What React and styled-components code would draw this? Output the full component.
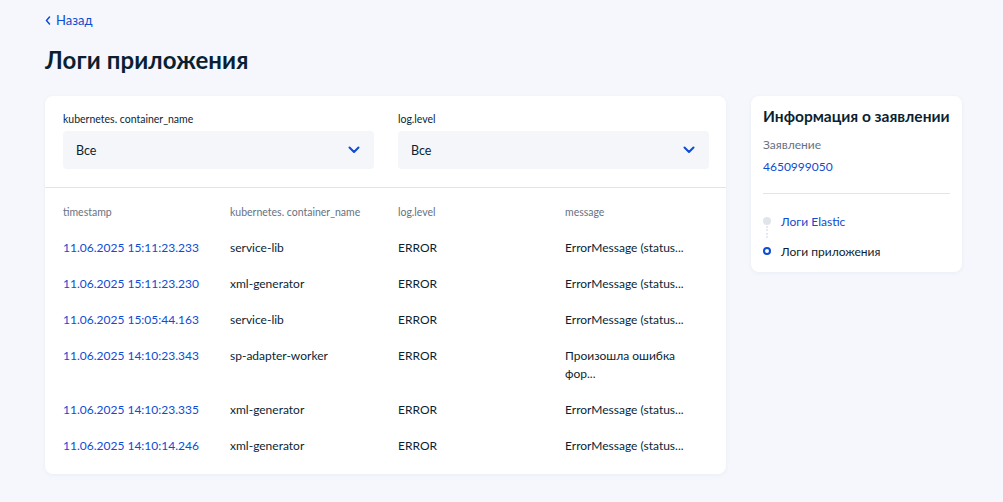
import React from "react";
import styled, { createGlobalStyle } from "styled-components";

const GlobalStyle = createGlobalStyle`
  body {
    margin: 0;
    background: #f5f7fc;
    font-family: Lato, "Noto Sans", sans-serif;
    color: #0b1f33;
  }
`;

const Page = styled.div`
  padding: 9px 41px 28px 45px;
`;

const Back = styled.a`
  display: inline-flex;
  align-items: center;
  gap: 5px;
  font-size: 13px;
  color: #0d4cd3;
  text-decoration: none;
  cursor: pointer;
  svg {
    margin-top: 1px;
  }
`;

const Title = styled.h1`
  margin: 16px 0 20px;
  font-size: 24px;
  line-height: 32px;
  font-weight: 700;
  letter-spacing: 0.1px;
`;

const Layout = styled.div`
  display: flex;
  align-items: flex-start;
  gap: 25px;
`;

const Card = styled.div`
  background: #fff;
  border-radius: 8px;
  box-shadow: 0 1px 4px rgba(30, 60, 140, 0.06);
  flex-shrink: 0;
`;

const MainCard = styled(Card)`
  width: 681px;
  padding-bottom: 10px;
`;

const Filters = styled.div`
  display: grid;
  grid-template-columns: 1fr 1fr;
  gap: 24px;
  padding: 15px 17px 18px 18px;
  border-bottom: 1px solid #e1e4ea;
`;

const Field = styled.div`
  display: flex;
  flex-direction: column;
  gap: 4px;
`;

const Label = styled.div`
  font-size: 10.5px;
  line-height: 16px;
  color: #0b1f33;
`;

const Select = styled.div`
  height: 38px;
  border-radius: 4px;
  background: #f4f6fa;
  display: flex;
  align-items: center;
  justify-content: space-between;
  padding: 0 14px 0 13px;
  font-size: 12.5px;
`;

const Table = styled.div`
  padding: 16px 17px 0 18px;
`;

const Row = styled.div`
  display: grid;
  grid-template-columns: 167px 168px 167px 132px;
  align-items: start;
  padding: ${(p) => (p.$head ? "0 0 10px" : "9px 0")};
`;

const HeadCell = styled.div`
  font-size: 10.5px;
  line-height: 16px;
  color: #66727f;
  white-space: nowrap;
`;

const Cell = styled.div`
  font-size: 12px;
  line-height: 18px;
  color: ${(p) => (p.$link ? "#0d4cd3" : "#0b1f33")};
  white-space: ${(p) => (p.$wrap ? "normal" : "nowrap")};
`;

const SideCard = styled(Card)`
  width: 187px;
  padding: 10px 12px 6px;
`;

const SideTitle = styled.div`
  font-size: 15.5px;
  font-weight: 700;
  line-height: 20px;
`;

const SideLabel = styled.div`
  margin-top: 11px;
  font-size: 12px;
  line-height: 16px;
  color: #66727f;
`;

const SideLink = styled.a`
  display: block;
  margin-top: 5px;
  font-size: 12px;
  line-height: 18px;
  color: #0d4cd3;
`;

const Divider = styled.div`
  height: 1px;
  background: #e1e4ea;
  margin: 17px 0 12px;
`;

const Steps = styled.div`
  display: flex;
  flex-direction: column;
`;

const Step = styled.div`
  position: relative;
  display: flex;
  align-items: center;
  gap: 10px;
  height: 30px;
  font-size: 12px;
  color: ${(p) => (p.$active ? "#0b1f33" : "#0d4cd3")};
`;

const Dot = styled.span`
  width: 8px;
  height: 8px;
  border-radius: 50%;
  box-sizing: border-box;
  background: ${(p) => (p.$active ? "#fff" : "#e1e4ea")};
  border: ${(p) => (p.$active ? "2px solid #0d4cd3" : "none")};
  flex-shrink: 0;
`;

const Connector = styled.span`
  position: absolute;
  left: 3px;
  top: 20px;
  height: 12px;
  border-left: 2px dotted #e6e9ee;
`;

const Chevron = ({ dir = "down" }) =>
  dir === "down" ? (
    <svg width="12" height="8" viewBox="0 0 12 8">
      <path d="M1.5 1.5l4.5 4.5 4.5-4.5" fill="none" stroke="#0d4cd3" strokeWidth="2" strokeLinecap="round" strokeLinejoin="round" />
    </svg>
  ) : (
    <svg width="6" height="9" viewBox="0 0 6 9">
      <path d="M4.5 1L1.5 4.5 4.5 8" fill="none" stroke="#0d4cd3" strokeWidth="1.5" strokeLinecap="round" strokeLinejoin="round" />
    </svg>
  );

const logs = [
  { ts: "11.06.2025 15:11:23.233", name: "service-lib", level: "ERROR", msg: "ErrorMessage (status..." },
  { ts: "11.06.2025 15:11:23.230", name: "xml-generator", level: "ERROR", msg: "ErrorMessage (status..." },
  { ts: "11.06.2025 15:05:44.163", name: "service-lib", level: "ERROR", msg: "ErrorMessage (status..." },
  { ts: "11.06.2025 14:10:23.343", name: "sp-adapter-worker", level: "ERROR", msg: "Произошла ошибка фор..." },
  { ts: "11.06.2025 14:10:23.335", name: "xml-generator", level: "ERROR", msg: "ErrorMessage (status..." },
  { ts: "11.06.2025 14:10:14.246", name: "xml-generator", level: "ERROR", msg: "ErrorMessage (status..." },
];

const App = () => {
  return (
    <Page>
      <GlobalStyle />
      <Back>
        <Chevron dir="left" />
        Назад
      </Back>
      <Title>Логи приложения</Title>
      <Layout>
        <MainCard>
          <Filters>
            <Field>
              <Label>kubernetes. container_name</Label>
              <Select>
                Все
                <Chevron />
              </Select>
            </Field>
            <Field>
              <Label>log.level</Label>
              <Select>
                Все
                <Chevron />
              </Select>
            </Field>
          </Filters>
          <Table>
            <Row $head>
              <HeadCell>timestamp</HeadCell>
              <HeadCell>kubernetes. container_name</HeadCell>
              <HeadCell>log.level</HeadCell>
              <HeadCell>message</HeadCell>
            </Row>
            {logs.map((log) => (
              <Row key={log.ts}>
                <Cell $link>{log.ts}</Cell>
                <Cell>{log.name}</Cell>
                <Cell>{log.level}</Cell>
                <Cell $wrap>{log.msg}</Cell>
              </Row>
            ))}
          </Table>
        </MainCard>
        <SideCard>
          <SideTitle>Информация о заявлении</SideTitle>
          <SideLabel>Заявление</SideLabel>
          <SideLink>4650999050</SideLink>
          <Divider />
          <Steps>
            <Step>
              <Dot />
              Логи Elastic
              <Connector />
            </Step>
            <Step $active>
              <Dot $active />
              Логи приложения
            </Step>
          </Steps>
        </SideCard>
      </Layout>
    </Page>
  );
};

export default App;
